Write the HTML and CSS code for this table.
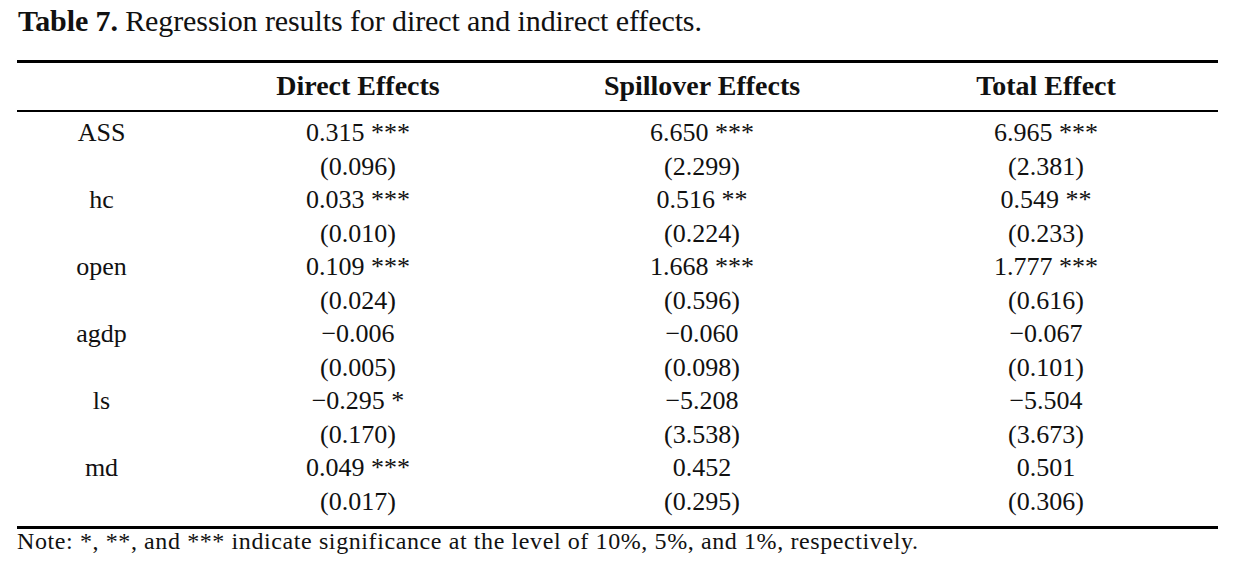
FILE: index.html
```html
<!DOCTYPE html>
<html>
<head>
<meta charset="utf-8">
<link rel="stylesheet" href="styles.css">
</head>
<body>
<div class="page">
  <p class="caption"><b>Table 7.</b> Regression results for direct and indirect effects.</p>
  <div class="table">
    <div class="head">
      <div class="row">
        <div></div>
        <div>Direct Effects</div>
        <div>Spillover Effects</div>
        <div>Total Effect</div>
      </div>
    </div>
    <div class="body">
      <div class="row"><div>ASS</div><div>0.315 ***</div><div>6.650 ***</div><div>6.965 ***</div></div>
      <div class="row"><div></div><div>(0.096)</div><div>(2.299)</div><div>(2.381)</div></div>
      <div class="row"><div>hc</div><div>0.033 ***</div><div>0.516 **</div><div>0.549 **</div></div>
      <div class="row"><div></div><div>(0.010)</div><div>(0.224)</div><div>(0.233)</div></div>
      <div class="row"><div>open</div><div>0.109 ***</div><div>1.668 ***</div><div>1.777 ***</div></div>
      <div class="row"><div></div><div>(0.024)</div><div>(0.596)</div><div>(0.616)</div></div>
      <div class="row"><div>agdp</div><div>&minus;0.006</div><div>&minus;0.060</div><div>&minus;0.067</div></div>
      <div class="row"><div></div><div>(0.005)</div><div>(0.098)</div><div>(0.101)</div></div>
      <div class="row"><div>ls</div><div>&minus;0.295 *</div><div>&minus;5.208</div><div>&minus;5.504</div></div>
      <div class="row"><div></div><div>(0.170)</div><div>(3.538)</div><div>(3.673)</div></div>
      <div class="row"><div>md</div><div>0.049 ***</div><div>0.452</div><div>0.501</div></div>
      <div class="row"><div></div><div>(0.017)</div><div>(0.295)</div><div>(0.306)</div></div>
    </div>
  </div>
  <p class="note">Note: *, **, and *** indicate significance at the level of 10%, 5%, and 1%, respectively.</p>
</div>
</body>
</html>
```
FILE: styles.css
```css
html, body {
  margin: 0;
  padding: 0;
  background: #fff;
}
body {
  font-family: "Liberation Serif", "Times New Roman", serif;
  color: #111;
}
.page {
  width: 1242px;
}
.caption {
  margin: 0;
  padding: 3px 0 0 18px;
  font-size: 30px;
  line-height: 36px;
  letter-spacing: -0.1px;
}
.caption b {
  font-weight: bold;
}
.table {
  margin: 21px 0 0 17px;
  width: 1201px;
  border-top: 3px solid #000;
  border-bottom: 3px solid #000;
}
.row {
  display: grid;
  grid-template-columns: 169px repeat(3, 344px);
  text-align: center;
  height: 33.5px;
  line-height: 33.5px;
  font-size: 26px;
  white-space: nowrap;
}
.head {
  padding: 6px 0 7.5px;
  border-bottom: 2px solid #000;
}
.head .row {
  font-size: 28px;
  font-weight: bold;
}
.body {
  padding: 4px 0 8px;
}
.note {
  margin: -1px 0 0 17px;
  font-size: 24px;
  line-height: 26px;
  letter-spacing: 0.6px;
}
```
